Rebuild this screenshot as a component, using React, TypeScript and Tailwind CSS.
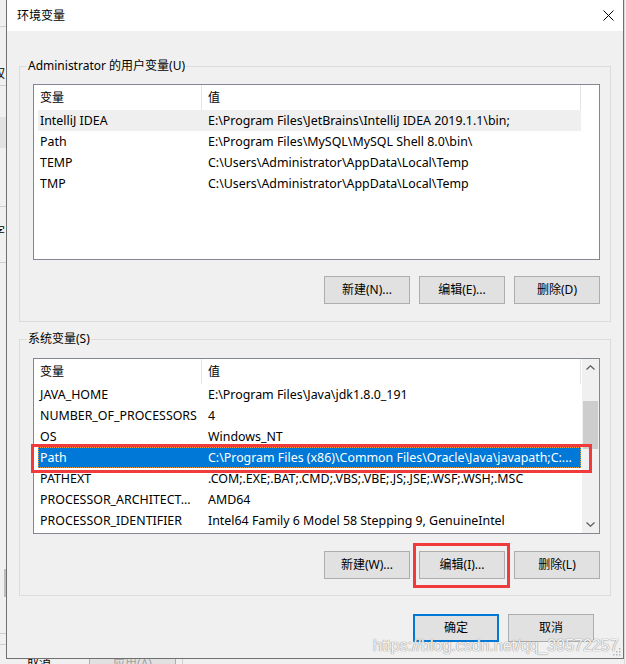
import React from 'react';

type Row = { name: string; value: string };

const userVars: Row[] = [
  { name: 'IntelliJ IDEA', value: 'E:\\Program Files\\JetBrains\\IntelliJ IDEA 2019.1.1\\bin;' },
  { name: 'Path', value: 'E:\\Program Files\\MySQL\\MySQL Shell 8.0\\bin\\' },
  { name: 'TEMP', value: 'C:\\Users\\Administrator\\AppData\\Local\\Temp' },
  { name: 'TMP', value: 'C:\\Users\\Administrator\\AppData\\Local\\Temp' },
];

const systemVars: Row[] = [
  { name: 'JAVA_HOME', value: 'E:\\Program Files\\Java\\jdk1.8.0_191' },
  { name: 'NUMBER_OF_PROCESSORS', value: '4' },
  { name: 'OS', value: 'Windows_NT' },
  { name: 'Path', value: 'C:\\Program Files (x86)\\Common Files\\Oracle\\Java\\javapath;C:...' },
  { name: 'PATHEXT', value: '.COM;.EXE;.BAT;.CMD;.VBS;.VBE;.JS;.JSE;.WSF;.WSH;.MSC' },
  { name: 'PROCESSOR_ARCHITECT...', value: 'AMD64' },
  { name: 'PROCESSOR_IDENTIFIER', value: 'Intel64 Family 6 Model 58 Stepping 9, GenuineIntel' },
];

const font = 'font-["Noto_Sans","Noto_Sans_CJK_SC",sans-serif]';

const Button: React.FC<{ label: string; primary?: boolean }> = ({ label, primary }) => (
  <button
    className={`h-[28px] w-[86px] bg-[#e1e1e1] text-[12px] text-black flex items-center justify-center ${
      primary ? 'border-2 border-[#0078d7]' : 'border border-[#adadad]'
    }`}
  >
    {label}
  </button>
);

const VarList: React.FC<{
  rows: Row[];
  hovered?: number;
  selected?: number;
  scrollbar?: boolean;
}> = ({ rows, hovered, selected, scrollbar }) => (
  <div className="relative h-[176px] w-[567px] border border-[#828790] bg-white flex">
    <div className="flex-1 flex flex-col">
      {/* column headers */}
      <div className="flex h-[25px] text-[12px] text-black">
        <div className="w-[168px] border-r border-[#e5e5e5] pl-[6px] flex items-center">变量</div>
        <div className="w-[379px] border-r border-[#e5e5e5] pl-[6px] flex items-center">值</div>
      </div>
      <div className="ml-[4px] w-[543px] flex flex-col">
        {rows.map((r, i) => (
          <div
            key={r.name + i}
            className={`flex h-[21px] pt-[2px] items-center text-[12.4px] whitespace-nowrap ${
              i === selected
                ? 'bg-[#0078d7] text-white outline-1 outline-dotted outline-[#f0a040] -outline-offset-1'
                : i === hovered
                ? 'bg-[#efefef] text-black'
                : 'text-black'
            }`}
          >
            <div className="w-[170px] pl-[2px]">{r.name}</div>
            <div className="flex-1 overflow-hidden">{r.value}</div>
          </div>
        ))}
      </div>
    </div>
    {scrollbar && (
      <div className="w-[17px] bg-[#f0f0f0] flex flex-col">
        <div className="h-[17px] flex items-center justify-center">
          <svg width="9" height="5" viewBox="0 0 9 5">
            <path d="M0.5 4.5 L4.5 0.8 L8.5 4.5" fill="none" stroke="#606060" strokeWidth="1.3" />
          </svg>
        </div>
        <div className="flex-1 flex flex-col">
          <div className="mt-[25px] h-[48px] mx-[1px] bg-[#cdcdcd]" />
        </div>
        <div className="h-[17px] flex items-center justify-center">
          <svg width="9" height="5" viewBox="0 0 9 5">
            <path d="M0.5 0.5 L4.5 4.2 L8.5 0.5" fill="none" stroke="#606060" strokeWidth="1.3" />
          </svg>
        </div>
      </div>
    )}
    {selected !== undefined && (
      <div className="absolute left-[-3px] top-[85px] w-[561px] h-[29px] border-[3px] border-[#ef3b3b]" />
    )}
  </div>
);

export default function App() {
  return (
    <div className={`relative w-[626px] h-[664px] bg-[#f0f0f0] overflow-hidden ${font}`}>
      {/* window behind the dialog */}
      <div className="absolute left-0 top-[26px] w-[6px] h-px bg-[#cfcfcf]" />
      <div className="absolute left-[-7px] top-[66px] text-[12px] leading-[16px] text-black">权</div>
      <div className="absolute left-0 top-[85px] w-[6px] h-px bg-[#cfcfcf]" />
      <div className="absolute left-0 top-[117px] w-[6px] h-[31px] bg-[#e2e2e2]" />
      <div className="absolute left-0 top-[206px] w-[6px] h-px bg-[#cfcfcf]" />
      <div className="absolute left-[-7px] top-[224px] text-[12px] leading-[16px] text-black">字</div>
      <div className="absolute left-0 top-[262px] w-[6px] h-px bg-[#cfcfcf]" />
      <div className="absolute left-[4px] top-[569px] w-[2px] h-[28px] bg-[#bdbdbd]" />
      <div className="absolute left-0 top-[633px] w-[6px] h-px bg-[#cfcfcf]" />
      <div className="absolute left-0 top-[644px] w-[6px] h-px bg-[#cfcfcf]" />
      <div className="absolute left-[27px] top-[655px] text-[12px] leading-[16px] text-black">取消</div>
      <div className="absolute left-[89px] top-[650px] w-[87px] h-[28px] border border-[#adadad] bg-[#e1e1e1] flex items-center justify-center text-[12px] text-[#a0a0a0]">
        应用(A)
      </div>
      <div className="absolute left-[182px] top-[650px] w-px h-[20px] bg-[#cfcfcf]" />
      <div className="absolute left-[624px] top-0 w-px h-[664px] bg-[#d9d9d9]" />

      {/* dialog window */}
      <div className="absolute left-[6px] top-0 w-[618px] h-[659px] border-x border-b border-[#6f6f6f] bg-[#f0f0f0] flex flex-col">
        <div className="h-[31px] bg-white flex items-center justify-between pl-[10px] pr-[9px]">
          <span className="text-[12px] text-black">环境变量</span>
          <svg width="11" height="11" viewBox="0 0 11 11">
            <path d="M0.5 0.5 L10.5 10.5 M10.5 0.5 L0.5 10.5" stroke="#000" strokeWidth="1" />
          </svg>
        </div>

        <div className="flex-1 px-[12px] flex flex-col">
          <fieldset className="mt-[27px] border border-[#dcdcdc] pt-[10px] pl-[13px] pr-[10px] pb-[17px]">
            <legend className="ml-[-6px] px-[1px] text-[12px] leading-[16px] text-black">
              Administrator 的用户变量(U)
            </legend>
            <VarList rows={userVars} hovered={0} />
            <div className="mt-[16px] flex justify-end gap-[9px]">
              <Button label="新建(N)..." />
              <Button label="编辑(E)..." />
              <Button label="删除(D)" />
            </div>
          </fieldset>

          <fieldset className="mt-[9px] border border-[#dcdcdc] pt-[11px] pl-[13px] pr-[10px] pb-[16px]">
            <legend className="ml-[-6px] px-[1px] text-[12px] leading-[16px] text-black">系统变量(S)</legend>
            <VarList rows={systemVars} selected={3} scrollbar />
            <div className="mt-[17px] flex justify-end gap-[9px]">
              <Button label="新建(W)..." />
              <div className="relative">
                <Button label="编辑(I)..." />
                <div className="absolute -left-[6px] -right-[5px] -top-[8px] -bottom-[9px] border-[3px] border-[#ef3b3b]" />
              </div>
              <Button label="删除(L)" />
            </div>
          </fieldset>

          <div className="mt-[18px] flex justify-end gap-[9px] pr-[17px]">
            <Button label="确定" primary />
            <Button label="取消" />
          </div>
        </div>

        {/* resize grip */}
        <svg className="absolute right-[2px] bottom-[2px]" width="9" height="9" viewBox="0 0 9 9">
          <rect x="7" y="1" width="1.5" height="1.5" fill="#b8b8b8" />
          <rect x="4" y="4" width="1.5" height="1.5" fill="#b8b8b8" />
          <rect x="7" y="4" width="1.5" height="1.5" fill="#b8b8b8" />
          <rect x="1" y="7" width="1.5" height="1.5" fill="#b8b8b8" />
          <rect x="4" y="7" width="1.5" height="1.5" fill="#b8b8b8" />
          <rect x="7" y="7" width="1.5" height="1.5" fill="#b8b8b8" />
        </svg>
      </div>

      {/* blog watermark */}
      <div className='absolute left-[373px] top-[636px] font-["Liberation_Sans",Arial,sans-serif] text-[16px] leading-[19px] text-white/90 [text-shadow:0_0_1px_#8a8a8a,0_0_1px_#8a8a8a]'>
        https://blog.csdn.net/qq_39572257
      </div>
    </div>
  );
}
